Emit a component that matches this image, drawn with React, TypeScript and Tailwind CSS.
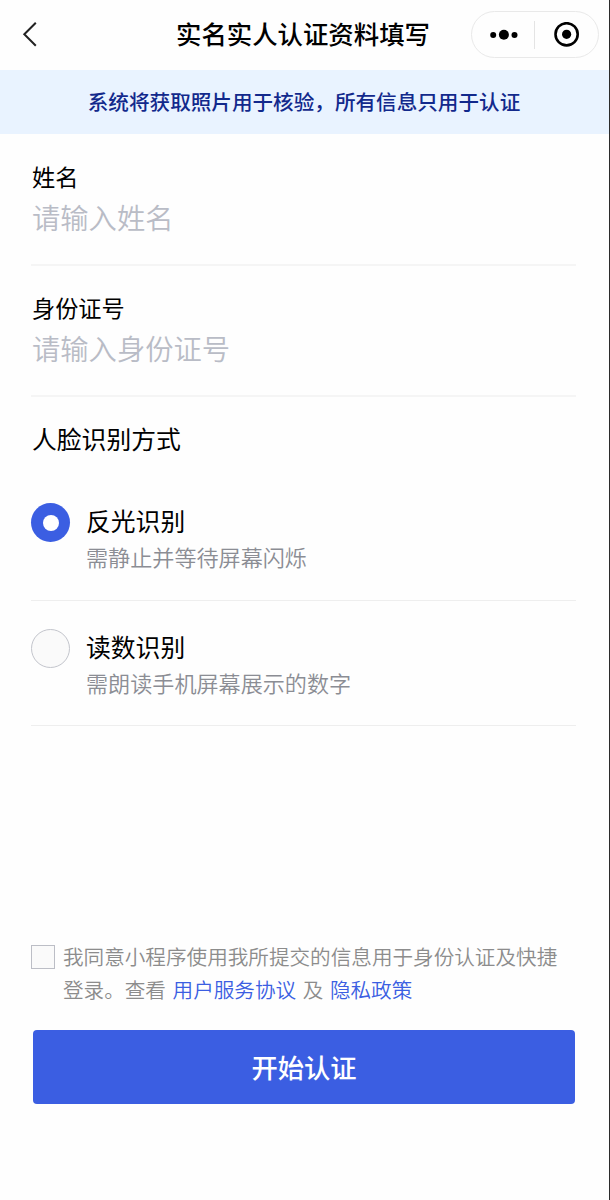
import { useState } from "react";

type Field = {
  name: string;
  label: string;
  placeholder: string;
};

type Method = {
  id: string;
  title: string;
  description: string;
};

const fields: Field[] = [
  { name: "realName", label: "姓名", placeholder: "请输入姓名" },
  { name: "idNumber", label: "身份证号", placeholder: "请输入身份证号" },
];

const methods: Method[] = [
  { id: "light", title: "反光识别", description: "需静止并等待屏幕闪烁" },
  { id: "number", title: "读数识别", description: "需朗读手机屏幕展示的数字" },
];

const NavBar = () => {
  return (
    <header className="flex h-[70px] items-center pr-[10px] pl-[22px]">
      <button className="w-[154px] cursor-pointer" aria-label="返回">
        <svg width="16" height="26" viewBox="0 0 16 26" fill="none">
          <path d="M13.8 0.8L2.3 12.3L13.8 23.8" stroke="#222" strokeWidth="2" />
        </svg>
      </button>
      <h1 className="pb-[5px] text-[25.4px] leading-[36px] font-medium whitespace-nowrap text-black">
        实名实人认证资料填写
      </h1>
      <div className="mb-px ml-auto flex h-[47px] w-[128.5px] shrink-0 items-center rounded-full border border-[#e9e9e9]">
        <button className="flex flex-1 cursor-pointer justify-center" aria-label="更多">
          <svg width="30" height="12" viewBox="0 0 30 12" fill="#000">
            <circle cx="5.2" cy="6" r="3" />
            <circle cx="15.9" cy="5.7" r="5" />
            <circle cx="26.5" cy="6" r="3" />
          </svg>
        </button>
        <span className="h-[28px] w-px bg-[#e4e4e4]" />
        <button className="flex flex-1 cursor-pointer justify-center" aria-label="关闭">
          <svg width="26" height="26" viewBox="0 0 26 26" fill="none">
            <circle cx="12.6" cy="12.3" r="11.1" stroke="#000" strokeWidth="2.6" />
            <circle cx="12.6" cy="12.3" r="4.6" fill="#000" />
          </svg>
        </button>
      </div>
    </header>
  );
};

const App = () => {
  const [method, setMethod] = useState("light");
  const [agreed, setAgreed] = useState(false);

  return (
    <div className="h-[1200px] w-[610px] border-r border-[#2b2b2b] bg-[#fefefe] font-['Noto_Sans_CJK_SC',sans-serif]">
      <NavBar />
      <p className="h-[64px] bg-[#e9f3ff] pr-px text-center text-[20.6px] leading-[63px] font-medium text-[#12298c]">
        系统将获取照片用于核验，所有信息只用于认证
      </p>

      <main className="pt-px pr-[33px] pl-[31px]">
        {fields.map((field) => (
          <label
            key={field.name}
            className="block h-[131px] border-b-2 border-[#f5f5f5] pt-[24px]"
          >
            <span className="block pl-px text-[23.2px] leading-[34px] text-black">
              {field.label}
            </span>
            <input
              name={field.name}
              placeholder={field.placeholder}
              className="block h-[46px] w-full pl-px text-[28.3px] font-[350] text-black outline-none placeholder:text-[#b9bcc6]"
            />
          </label>
        ))}

        <h2 className="pt-[23px] pl-px text-[24.8px] leading-[36px] text-black">
          人脸识别方式
        </h2>
        <div className="pt-[19px]">
          {methods.map((item) => (
            <div
              key={item.id}
              onClick={() => setMethod(item.id)}
              className="flex h-[125.5px] cursor-pointer gap-4 border-b border-[#eeeeee] pt-[28px]"
            >
              {method === item.id ? (
                <span className="flex size-[39px] items-center justify-center rounded-full bg-[#3b5ee2]">
                  <span className="size-4 rounded-full bg-white" />
                </span>
              ) : (
                <span className="size-[39px] rounded-full border-[1.5px] border-[#c3c5cc] bg-[#fafafa]" />
              )}
              <div className="-mt-[2px]">
                <h3 className="text-[24.8px] leading-[38px] text-black">{item.title}</h3>
                <p className="text-[22.1px] leading-[34px] font-[350] text-[#8b8d94]">
                  {item.description}
                </p>
              </div>
            </div>
          ))}
        </div>

        <div className="flex gap-2 pt-[214px]">
          <button
            onClick={() => setAgreed(!agreed)}
            aria-label="同意"
            className={
              agreed
                ? "mt-[5px] size-6 shrink-0 cursor-pointer border border-[#3b5ee2] bg-[#3b5ee2]"
                : "mt-[5px] size-6 shrink-0 cursor-pointer border border-[#bcbec6] bg-[#fafafa]"
            }
          />
          <p className="text-[20.6px] leading-[32.5px] font-[350] [word-spacing:2px] whitespace-nowrap text-[#8c8c8c]">
            我同意小程序使用我所提交的信息用于身份认证及快捷
            <br />
            登录。查看 <a className="text-[#3b5ee2]">用户服务协议</a> 及{" "}
            <a className="text-[#3b5ee2]">隐私政策</a>
          </p>
        </div>

        <button className="mt-[25px] ml-[2px] block h-[74px] w-[542px] cursor-pointer rounded-[4px] bg-[#3b5ee2] text-[26.3px] font-medium text-white">
          开始认证
        </button>
      </main>
    </div>
  );
};

export default App;
